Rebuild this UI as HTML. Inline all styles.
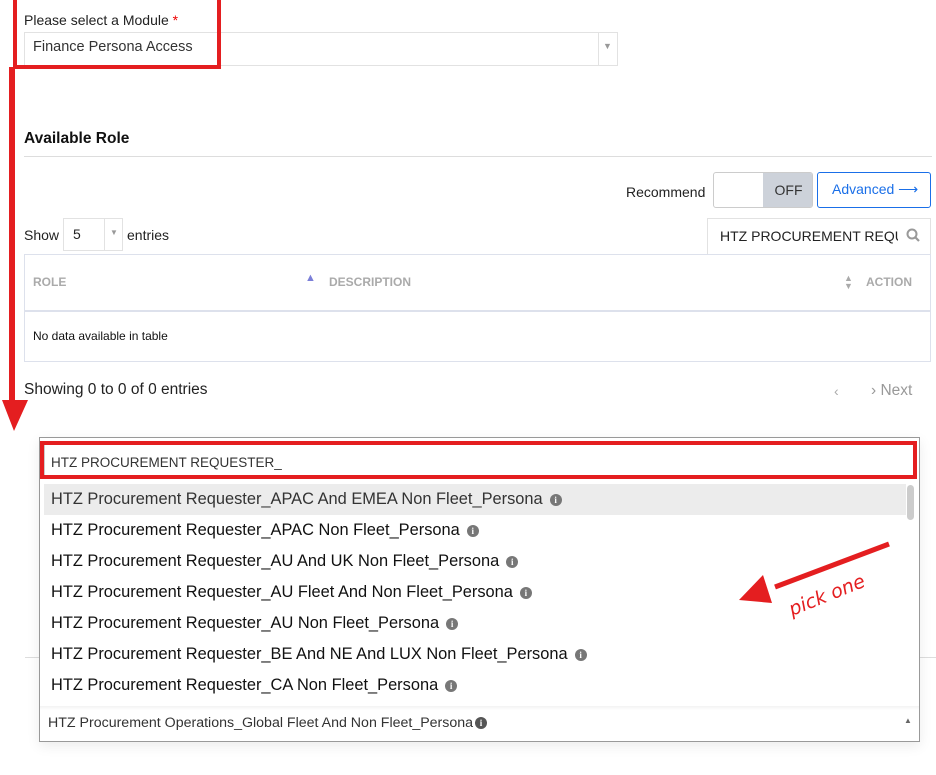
<!DOCTYPE html>
<html><head><meta charset="utf-8"><style>
*{box-sizing:border-box;margin:0;padding:0}
body{width:936px;height:775px;background:#fff;font-family:"Liberation Sans",sans-serif;color:#222;position:relative;overflow:hidden}
.a{position:absolute}
.info{display:inline-block;width:12px;height:12px;border-radius:50%;background:#777;color:#fff;font-size:9px;font-weight:bold;text-align:center;line-height:12px;font-family:"Liberation Serif",serif;vertical-align:1px;margin-left:7px}
.it{position:absolute;left:44px;width:862px;height:31px;line-height:31px;padding-left:7px;font-size:16.4px;color:#111;white-space:nowrap}
</style></head><body>
<div class="a" style="left:24px;top:12px;font-size:14px;color:#222">Please select a Module <span style="color:#e00">*</span></div>
<div class="a" style="left:24px;top:32px;width:594px;height:34px;border:1px solid #e2e2e2"></div>
<div class="a" style="left:33px;top:39px;font-size:14.5px;color:#333">Finance Persona Access</div>
<div class="a" style="left:598px;top:33px;width:1px;height:32px;background:#e2e2e2"></div>
<div class="a" style="left:603px;top:41px;font-size:9px;color:#999">▼</div>
<div class="a" style="left:13px;top:0;width:208px;height:69px;border:4px solid #e41e20;border-top:none"></div>
<div class="a" style="left:9px;top:67px;width:6px;height:336px;background:#e41e20"></div>
<svg class="a" style="left:0;top:398px" width="30" height="34"><polygon points="2,2 28,2 14,33" fill="#e41e20"/></svg>

<div class="a" style="left:24px;top:130px;font-size:15.5px;font-weight:bold;color:#111">Available Role</div>
<div class="a" style="left:24px;top:156px;width:908px;height:1px;background:#ddd"></div>

<div class="a" style="left:626px;top:184px;font-size:14px">Recommend</div>
<div class="a" style="left:713px;top:172px;width:100px;height:36px;border:1px solid #ccc;border-radius:3px;overflow:hidden"><div style="position:absolute;left:49px;top:0;width:51px;height:36px;background:#cdd2da;text-align:center;line-height:34px;font-size:14px;color:#333">OFF</div></div>
<div class="a" style="left:817px;top:172px;width:114px;height:36px;border:1px solid #1a6fe8;border-radius:3px;color:#1a6fe8;font-size:14px;line-height:33px;padding-left:14px">Advanced ⟶</div>

<div class="a" style="left:24px;top:227px;font-size:14px">Show</div>
<div class="a" style="left:63px;top:218px;width:60px;height:33px;border:1px solid #e2e2e2"></div>
<div class="a" style="left:104px;top:218px;width:1px;height:33px;background:#e2e2e2"></div>
<div class="a" style="left:73px;top:226px;font-size:14px">5</div>
<div class="a" style="left:110px;top:228px;font-size:8px;color:#999">▼</div>
<div class="a" style="left:127px;top:227px;font-size:14px">entries</div>
<div class="a" style="left:707px;top:218px;width:224px;height:36px;border:1px solid #e2e2e2;border-bottom:none"></div>
<div class="a" style="left:720px;top:228px;font-size:14px;width:178px;overflow:hidden;white-space:nowrap">HTZ PROCUREMENT REQUESTER_</div>
<svg class="a" style="left:906px;top:228px" width="14" height="14"><circle cx="6" cy="6" r="4.5" stroke="#999" stroke-width="2" fill="none"/><line x1="9" y1="9" x2="13" y2="13" stroke="#999" stroke-width="2.2"/></svg>

<div class="a" style="left:24px;top:254px;width:907px;height:108px;border:1px solid #dde1ec"></div>
<div class="a" style="left:24px;top:310px;width:907px;height:2px;background:#dde1ec"></div>
<div class="a" style="left:33px;top:275px;font-size:12px;font-weight:bold;color:#aaa">ROLE</div>
<div class="a" style="left:305px;top:272px;font-size:11px;color:#7b7fd8">▲</div>
<div class="a" style="left:329px;top:275px;font-size:12px;font-weight:bold;color:#aaa">DESCRIPTION</div>
<div class="a" style="left:844px;top:274px;font-size:9px;color:#aaa;line-height:8px">▲<br>▼</div>
<div class="a" style="left:866px;top:275px;font-size:12px;font-weight:bold;color:#aaa">ACTION</div>
<div class="a" style="left:33px;top:329px;font-size:12px;color:#111">No data available in table</div>
<div class="a" style="left:24px;top:381px;font-size:15.5px;color:#222">Showing 0 to 0 of 0 entries</div>
<div class="a" style="left:834px;top:383px;font-size:14px;color:#aaa">‹</div>
<div class="a" style="left:871px;top:382px;font-size:15.5px;color:#999">› Next</div>

<div class="a" style="left:25px;top:657px;width:911px;height:1px;background:#ddd"></div>
<div class="a" style="left:39px;top:437px;width:881px;height:305px;border:1px solid #999;background:#fff;box-shadow:0 4px 12px rgba(0,0,0,.08)"></div>
<div class="a" style="left:44px;top:444px;width:870px;height:32px;border:1px solid #ccc"></div>
<div class="a" style="left:40px;top:441px;width:877px;height:38px;border:4px solid #e41e20"></div>
<div class="a" style="left:51px;top:455px;font-size:13.5px;color:#333">HTZ PROCUREMENT REQUESTER_</div>
<div class="a" style="left:44px;top:484px;width:862px;height:31px;background:#ececec"></div>
<div class="a" style="left:907px;top:485px;width:7px;height:35px;border-radius:4px;background:#ccc"></div>
<div class="it" style="top:484px;color:#333">HTZ Procurement Requester_APAC And EMEA Non Fleet_Persona<span class="info">i</span></div>
<div class="it" style="top:515px">HTZ Procurement Requester_APAC Non Fleet_Persona<span class="info">i</span></div>
<div class="it" style="top:546px">HTZ Procurement Requester_AU And UK Non Fleet_Persona<span class="info">i</span></div>
<div class="it" style="top:577px">HTZ Procurement Requester_AU Fleet And Non Fleet_Persona<span class="info">i</span></div>
<div class="it" style="top:608px">HTZ Procurement Requester_AU Non Fleet_Persona<span class="info">i</span></div>
<div class="it" style="top:639px">HTZ Procurement Requester_BE And NE And LUX Non Fleet_Persona<span class="info">i</span></div>
<div class="it" style="top:670px">HTZ Procurement Requester_CA Non Fleet_Persona<span class="info">i</span></div>
<div class="a" style="left:40px;top:706px;width:879px;height:4px;background:linear-gradient(#f3f3f3,#fff)"></div>
<div class="a" style="left:48px;top:715px;font-size:14.2px;color:#333;white-space:nowrap">HTZ Procurement Operations_Global Fleet And Non Fleet_Persona<span class="info" style="margin-left:2px;background:#555">i</span></div>
<div class="a" style="left:904px;top:716px;font-size:8px;color:#666">▲</div>

<svg class="a" style="left:735px;top:540px" width="160" height="90">
<line x1="154" y1="4" x2="40" y2="47" stroke="#e41e20" stroke-width="5"/>
<polygon points="4,60 28,35 37,63" fill="#e41e20"/>
<text x="52" y="70" transform="rotate(-22 70 60)" font-family="'DejaVu Sans',sans-serif" font-style="italic" font-size="19" fill="#e41e20">pick one</text>
</svg>
</body></html>
